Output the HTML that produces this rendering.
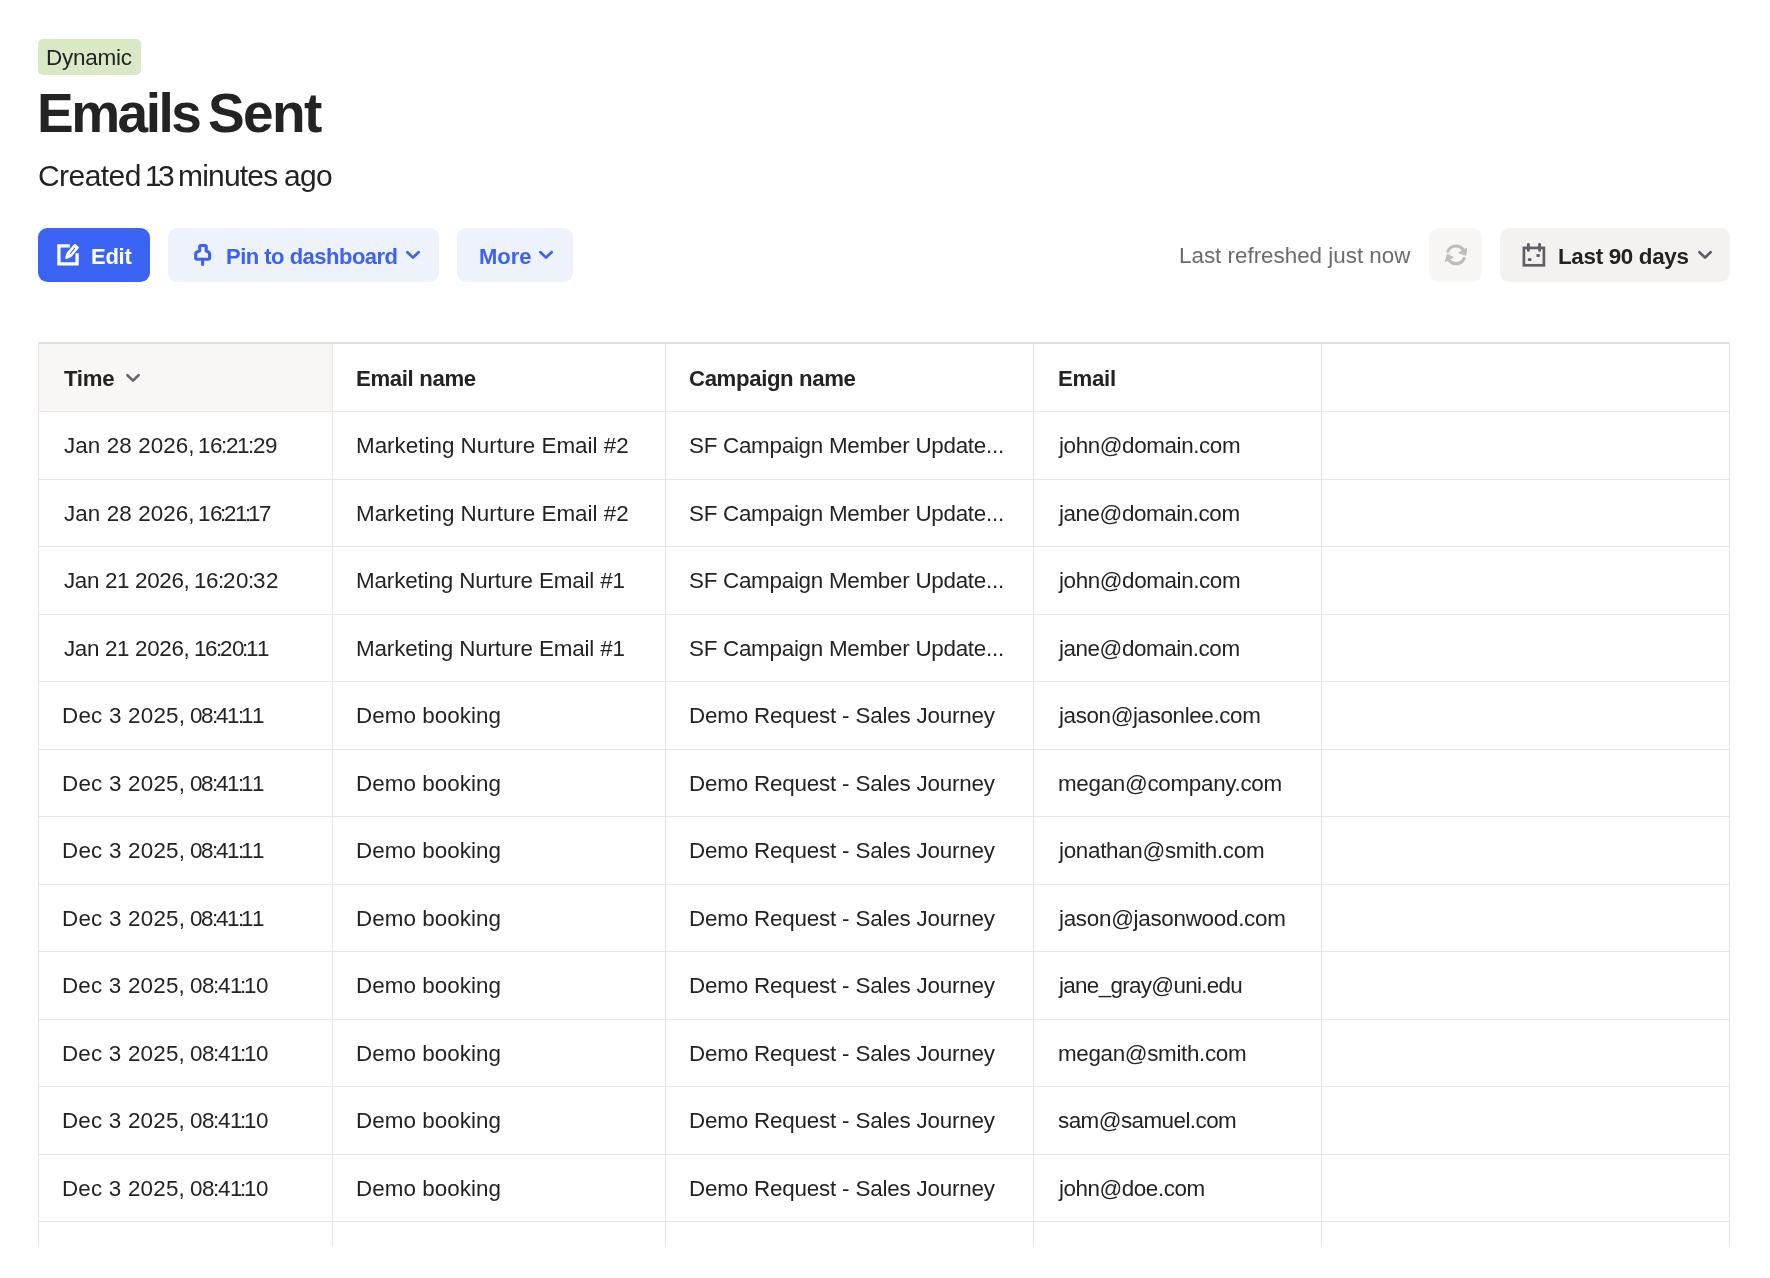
<!DOCTYPE html>
<html><head><meta charset="utf-8"><title>Emails Sent</title>
<style>
html,body{margin:0;padding:0;background:#fff;}
body{width:1770px;height:1278px;position:relative;overflow:hidden;font-family:"Liberation Sans",sans-serif;color:#232323;}
.t{position:absolute;white-space:nowrap;will-change:transform;}
.b{font-weight:bold;}
.box{position:absolute;}
.hl{position:absolute;height:1px;background:#e8e5e3;}
.vl{position:absolute;width:1px;background:#e8e5e3;}
svg{position:absolute;overflow:visible;}
</style></head><body>
<div class="box" style="left:38px;top:39px;width:103px;height:36px;background:#d9e9c5;border-radius:5px;"></div>
<div class="t " style="left:46.42px;top:46.95px;font-size:22.5px;line-height:22.5px;letter-spacing:-0.267px;">Dynamic</div>
<div class="t b" style="left:36.88px;top:86.34px;font-size:55px;line-height:55px;letter-spacing:-2.5px;color:#232323;">Emails</div>
<div class="t b" style="left:207.88px;top:86.34px;font-size:55px;line-height:55px;letter-spacing:-1.592px;color:#232323;">Sent</div>
<div class="t " style="left:38.1px;top:160.50px;font-size:30px;line-height:30px;letter-spacing:-0.558px;">Created</div>
<div class="t " style="left:144.55px;top:160.50px;font-size:30px;line-height:30px;letter-spacing:-4.6px;">1</div>
<div class="t " style="left:158.28px;top:160.50px;font-size:30px;line-height:30px;letter-spacing:-0.95px;">3</div>
<div class="t " style="left:178.3px;top:160.50px;font-size:30px;line-height:30px;letter-spacing:-0.812px;">minutes</div>
<div class="t " style="left:283.55px;top:160.50px;font-size:30px;line-height:30px;letter-spacing:-0.713px;">ago</div>
<div class="box" style="left:38px;top:228px;width:112px;height:54px;background:#3b64f4;border-radius:9.5px;"></div>
<svg style="left:52px;top:239px" width="32" height="32" viewBox="0 0 32 32">
<path d="M17.8 6.9 H6.9 V24.9 H25.1 V14.3" fill="none" stroke="#fff" stroke-width="3.25" stroke-linejoin="miter"/>
<path d="M22.3 5.1 Q22.8 4.7 23.4 5.1 L26.7 7.9 Q27.2 8.4 26.8 8.9 L19.7 17.6 Q17.2 19.5 14.4 20 Q13 19.9 13.3 18.4 Q13.9 15.4 15.3 13.1 Z" fill="#fff"/>
<path d="M22.6 9.3 L18.5 14.5" stroke="#3b64f4" stroke-width="1.1" stroke-linecap="round"/>
</svg>
<div class="t b" style="left:91.4px;top:246.38px;font-size:22px;line-height:22px;letter-spacing:-0.258px;color:#fff;">Edit</div>
<div class="box" style="left:168px;top:228px;width:271px;height:54px;background:#eef2fd;border-radius:9.5px;"></div>
<svg style="left:187px;top:239px" width="32" height="32" viewBox="0 0 32 32">
<path d="M12.7 11.8 V7.6 Q12.7 6.5 13.8 6.5 H18.1 Q19.2 6.5 19.2 7.6 V11.8 L21.6 13.2 Q22.6 13.8 22.6 15 V18.8 Q22.6 20.3 21.1 20.3 H10.2 Q8.7 20.3 8.7 18.8 V15 Q8.7 13.8 9.7 13.2 Z" fill="none" stroke="#3b62f0" stroke-width="3.1" stroke-linejoin="round"/>
<path d="M15.6 20.3 V25.6" stroke="#3b62f0" stroke-width="3" stroke-linecap="round"/>
</svg>
<div class="t b" style="left:226.0px;top:246.28px;font-size:22px;line-height:22px;letter-spacing:-0.51px;color:#3b62f0;">Pin to dashboard</div>
<svg style="left:400.00px;top:243.00px" width="24" height="24" viewBox="0 0 24 24"><path d="M7.4 9.2 L13 14.6 L18.6 9.2" fill="none" stroke="#3b62f0" stroke-width="2.7" stroke-linecap="round" stroke-linejoin="round"/></svg>
<div class="box" style="left:457px;top:228px;width:116px;height:54px;background:#eef2fd;border-radius:9.5px;"></div>
<div class="t b" style="left:479.0px;top:246.28px;font-size:22px;line-height:22px;letter-spacing:-0.025px;color:#3b62f0;">More</div>
<svg style="left:533.00px;top:243.00px" width="24" height="24" viewBox="0 0 24 24"><path d="M7.4 9.2 L13 14.6 L18.6 9.2" fill="none" stroke="#3b62f0" stroke-width="2.7" stroke-linecap="round" stroke-linejoin="round"/></svg>
<div class="t " style="left:1178.72px;top:244.74px;font-size:22.4px;line-height:22.4px;letter-spacing:-0.005px;color:#6b6a6f;">Last refreshed just now</div>
<div class="box" style="left:1429px;top:228px;width:53px;height:54px;background:#f7f6f5;border-radius:9.5px;"></div>
<svg style="left:1440px;top:239px" width="32" height="32" viewBox="0 0 32 32">
<path d="M7.9 12.3 A8.9 8.9 0 0 1 23.1 10.5" fill="none" stroke="#bdbdbd" stroke-width="3.1" stroke-linecap="round"/>
<path d="M24.1 19.5 A8.9 8.9 0 0 1 8.9 21.1" fill="none" stroke="#bdbdbd" stroke-width="3.1" stroke-linecap="round"/>
<path d="M26.6 9.4 L25.7 16.1 L19.1 13.7 Z" fill="#bdbdbd" stroke="#bdbdbd" stroke-width="1.2" stroke-linejoin="round"/>
<path d="M5.4 22.4 L7.4 15.5 L13 18.2 Z" fill="#bdbdbd" stroke="#bdbdbd" stroke-width="1.2" stroke-linejoin="round"/>
</svg>
<div class="box" style="left:1500px;top:228px;width:230px;height:54px;background:#f3f2f1;border-radius:9.5px;"></div>
<svg style="left:1518px;top:239px" width="32" height="32" viewBox="0 0 32 32">
<rect x="5.9" y="8.9" width="20" height="17.4" fill="none" stroke="#615f66" stroke-width="2.7"/>
<path d="M10.4 5.5 V11.4 M21.6 5.5 V11.4" stroke="#615f66" stroke-width="2.9" stroke-linecap="round"/>
<rect x="9.9" y="19.2" width="3.5" height="2.8" fill="#615f66"/>
<rect x="18.4" y="15.1" width="3.4" height="2.8" fill="#615f66"/>
</svg>
<div class="t b" style="left:1557.7px;top:245.94px;font-size:22.4px;line-height:22.4px;letter-spacing:-0.316px;color:#232323;">Last 90 days</div>
<svg style="left:1691.50px;top:243.00px" width="24" height="24" viewBox="0 0 24 24"><path d="M7.4 9.2 L13 14.6 L18.6 9.2" fill="none" stroke="#615f66" stroke-width="2.7" stroke-linecap="round" stroke-linejoin="round"/></svg>
<div class="box" style="left:38px;top:342px;width:1692px;height:905px;overflow:hidden;">
<div class="box" style="left:1px;top:2px;width:293px;height:67px;background:#f8f7f5;"></div>
<div class="box" style="left:0;top:0;width:1692px;height:2px;background:#e3dfdc;"></div>
<div class="hl" style="left:0;top:69px;width:1692px;"></div>
<div class="hl" style="left:0;top:137px;width:1692px;"></div>
<div class="hl" style="left:0;top:204px;width:1692px;"></div>
<div class="hl" style="left:0;top:272px;width:1692px;"></div>
<div class="hl" style="left:0;top:339px;width:1692px;"></div>
<div class="hl" style="left:0;top:407px;width:1692px;"></div>
<div class="hl" style="left:0;top:474px;width:1692px;"></div>
<div class="hl" style="left:0;top:542px;width:1692px;"></div>
<div class="hl" style="left:0;top:609px;width:1692px;"></div>
<div class="hl" style="left:0;top:677px;width:1692px;"></div>
<div class="hl" style="left:0;top:744px;width:1692px;"></div>
<div class="hl" style="left:0;top:812px;width:1692px;"></div>
<div class="hl" style="left:0;top:879px;width:1692px;"></div>
<div class="vl" style="left:0px;top:0;height:905px;"></div>
<div class="vl" style="left:294px;top:0;height:905px;"></div>
<div class="vl" style="left:627px;top:0;height:905px;"></div>
<div class="vl" style="left:995px;top:0;height:905px;"></div>
<div class="vl" style="left:1283px;top:0;height:905px;"></div>
<div class="vl" style="left:1691px;top:0;height:905px;"></div>
<div class="t b" style="left:25.75px;top:26.11px;font-size:22.2px;line-height:22.2px;letter-spacing:-0.3px;">Time</div>
<div class="t b" style="left:318.3px;top:26.11px;font-size:22.2px;line-height:22.2px;letter-spacing:-0.353px;">Email name</div>
<div class="t b" style="left:651.33px;top:26.11px;font-size:22.2px;line-height:22.2px;letter-spacing:-0.371px;">Campaign name</div>
<div class="t b" style="left:1020.1px;top:26.11px;font-size:22.2px;line-height:22.2px;letter-spacing:-0.262px;">Email</div>
<svg style="left:82.00px;top:24.00px" width="24" height="24" viewBox="0 0 24 24"><path d="M7.4 9.2 L13 14.6 L18.6 9.2" fill="none" stroke="#67656c" stroke-width="2.6" stroke-linecap="round" stroke-linejoin="round"/></svg>
<div class="t " style="left:25.52px;top:93.14px;font-size:22.4px;line-height:22.4px;letter-spacing:0.1px;">Jan 28 2026,</div>
<div class="t " style="left:160.05px;top:93.14px;font-size:22.4px;line-height:22.4px;">1</div>
<div class="t " style="left:172.04px;top:93.14px;font-size:22.4px;line-height:22.4px;">6</div>
<div class="t " style="left:183.27px;top:93.14px;font-size:22.4px;line-height:22.4px;">:</div>
<div class="t " style="left:188.01px;top:93.14px;font-size:22.4px;line-height:22.4px;">2</div>
<div class="t " style="left:199.37px;top:93.14px;font-size:22.4px;line-height:22.4px;">1</div>
<div class="t " style="left:210.48px;top:93.14px;font-size:22.4px;line-height:22.4px;">:</div>
<div class="t " style="left:215.21px;top:93.14px;font-size:22.4px;line-height:22.4px;">2</div>
<div class="t " style="left:227.33px;top:93.14px;font-size:22.4px;line-height:22.4px;">9</div>
<div class="t " style="left:317.73px;top:93.14px;font-size:22.4px;line-height:22.4px;letter-spacing:0.005px;">Marketing Nurture Email #2</div>
<div class="t " style="left:651.2px;top:93.14px;font-size:22.4px;line-height:22.4px;letter-spacing:-0.267px;">SF Campaign Member Update...</div>
<div class="t " style="left:1020.7px;top:93.14px;font-size:22.4px;line-height:22.4px;letter-spacing:-0.391px;">john@domain.com</div>
<div class="t " style="left:25.52px;top:160.64px;font-size:22.4px;line-height:22.4px;letter-spacing:0.1px;">Jan 28 2026,</div>
<div class="t " style="left:160.45px;top:160.64px;font-size:22.4px;line-height:22.4px;">1</div>
<div class="t " style="left:171.63px;top:160.64px;font-size:22.4px;line-height:22.4px;">6</div>
<div class="t " style="left:182.06px;top:160.64px;font-size:22.4px;line-height:22.4px;">:</div>
<div class="t " style="left:185.99px;top:160.64px;font-size:22.4px;line-height:22.4px;">2</div>
<div class="t " style="left:196.54px;top:160.64px;font-size:22.4px;line-height:22.4px;">1</div>
<div class="t " style="left:206.84px;top:160.64px;font-size:22.4px;line-height:22.4px;">:</div>
<div class="t " style="left:210.15px;top:160.64px;font-size:22.4px;line-height:22.4px;">1</div>
<div class="t " style="left:221.32px;top:160.64px;font-size:22.4px;line-height:22.4px;">7</div>
<div class="t " style="left:317.73px;top:160.64px;font-size:22.4px;line-height:22.4px;letter-spacing:0.005px;">Marketing Nurture Email #2</div>
<div class="t " style="left:651.2px;top:160.64px;font-size:22.4px;line-height:22.4px;letter-spacing:-0.267px;">SF Campaign Member Update...</div>
<div class="t " style="left:1020.7px;top:160.64px;font-size:22.4px;line-height:22.4px;letter-spacing:-0.427px;">jane@domain.com</div>
<div class="t " style="left:25.52px;top:228.14px;font-size:22.4px;line-height:22.4px;letter-spacing:-0.336px;">Jan 21 2026,</div>
<div class="t " style="left:155.65px;top:228.14px;font-size:22.4px;line-height:22.4px;">1</div>
<div class="t " style="left:168.14px;top:228.14px;font-size:22.4px;line-height:22.4px;">6</div>
<div class="t " style="left:179.88px;top:228.14px;font-size:22.4px;line-height:22.4px;">:</div>
<div class="t " style="left:185.12px;top:228.14px;font-size:22.4px;line-height:22.4px;">2</div>
<div class="t " style="left:197.86px;top:228.14px;font-size:22.4px;line-height:22.4px;">0</div>
<div class="t " style="left:209.72px;top:228.14px;font-size:22.4px;line-height:22.4px;">:</div>
<div class="t " style="left:215.21px;top:228.14px;font-size:22.4px;line-height:22.4px;">3</div>
<div class="t " style="left:227.82px;top:228.14px;font-size:22.4px;line-height:22.4px;">2</div>
<div class="t " style="left:317.73px;top:228.14px;font-size:22.4px;line-height:22.4px;letter-spacing:-0.139px;">Marketing Nurture Email #1</div>
<div class="t " style="left:651.2px;top:228.14px;font-size:22.4px;line-height:22.4px;letter-spacing:-0.267px;">SF Campaign Member Update...</div>
<div class="t " style="left:1020.7px;top:228.14px;font-size:22.4px;line-height:22.4px;letter-spacing:-0.391px;">john@domain.com</div>
<div class="t " style="left:25.52px;top:295.64px;font-size:22.4px;line-height:22.4px;letter-spacing:-0.336px;">Jan 21 2026,</div>
<div class="t " style="left:155.65px;top:295.64px;font-size:22.4px;line-height:22.4px;">1</div>
<div class="t " style="left:167.06px;top:295.64px;font-size:22.4px;line-height:22.4px;">6</div>
<div class="t " style="left:177.71px;top:295.64px;font-size:22.4px;line-height:22.4px;">:</div>
<div class="t " style="left:181.87px;top:295.64px;font-size:22.4px;line-height:22.4px;">2</div>
<div class="t " style="left:193.53px;top:295.64px;font-size:22.4px;line-height:22.4px;">0</div>
<div class="t " style="left:204.31px;top:295.64px;font-size:22.4px;line-height:22.4px;">:</div>
<div class="t " style="left:207.84px;top:295.64px;font-size:22.4px;line-height:22.4px;">1</div>
<div class="t " style="left:218.62px;top:295.64px;font-size:22.4px;line-height:22.4px;">1</div>
<div class="t " style="left:317.73px;top:295.64px;font-size:22.4px;line-height:22.4px;letter-spacing:-0.139px;">Marketing Nurture Email #1</div>
<div class="t " style="left:651.2px;top:295.64px;font-size:22.4px;line-height:22.4px;letter-spacing:-0.267px;">SF Campaign Member Update...</div>
<div class="t " style="left:1020.7px;top:295.64px;font-size:22.4px;line-height:22.4px;letter-spacing:-0.427px;">jane@domain.com</div>
<div class="t " style="left:24.02px;top:363.14px;font-size:22.4px;line-height:22.4px;letter-spacing:0.222px;">Dec 3 2025,</div>
<div class="t " style="left:151.62px;top:363.14px;font-size:22.4px;line-height:22.4px;">0</div>
<div class="t " style="left:163.22px;top:363.14px;font-size:22.4px;line-height:22.4px;">8</div>
<div class="t " style="left:173.69px;top:363.14px;font-size:22.4px;line-height:22.4px;">:</div>
<div class="t " style="left:178.28px;top:363.14px;font-size:22.4px;line-height:22.4px;">4</div>
<div class="t " style="left:189.25px;top:363.14px;font-size:22.4px;line-height:22.4px;">1</div>
<div class="t " style="left:199.59px;top:363.14px;font-size:22.4px;line-height:22.4px;">:</div>
<div class="t " style="left:202.93px;top:363.14px;font-size:22.4px;line-height:22.4px;">1</div>
<div class="t " style="left:213.52px;top:363.14px;font-size:22.4px;line-height:22.4px;">1</div>
<div class="t " style="left:317.73px;top:363.14px;font-size:22.4px;line-height:22.4px;letter-spacing:0.055px;">Demo booking</div>
<div class="t " style="left:650.92px;top:363.14px;font-size:22.4px;line-height:22.4px;letter-spacing:-0.189px;">Demo Request - Sales Journey</div>
<div class="t " style="left:1020.7px;top:363.14px;font-size:22.4px;line-height:22.4px;letter-spacing:-0.376px;">jason@jasonlee.com</div>
<div class="t " style="left:24.02px;top:430.64px;font-size:22.4px;line-height:22.4px;letter-spacing:0.222px;">Dec 3 2025,</div>
<div class="t " style="left:151.62px;top:430.64px;font-size:22.4px;line-height:22.4px;">0</div>
<div class="t " style="left:163.22px;top:430.64px;font-size:22.4px;line-height:22.4px;">8</div>
<div class="t " style="left:173.69px;top:430.64px;font-size:22.4px;line-height:22.4px;">:</div>
<div class="t " style="left:178.28px;top:430.64px;font-size:22.4px;line-height:22.4px;">4</div>
<div class="t " style="left:189.25px;top:430.64px;font-size:22.4px;line-height:22.4px;">1</div>
<div class="t " style="left:199.59px;top:430.64px;font-size:22.4px;line-height:22.4px;">:</div>
<div class="t " style="left:202.93px;top:430.64px;font-size:22.4px;line-height:22.4px;">1</div>
<div class="t " style="left:213.52px;top:430.64px;font-size:22.4px;line-height:22.4px;">1</div>
<div class="t " style="left:317.73px;top:430.64px;font-size:22.4px;line-height:22.4px;letter-spacing:0.055px;">Demo booking</div>
<div class="t " style="left:650.92px;top:430.64px;font-size:22.4px;line-height:22.4px;letter-spacing:-0.189px;">Demo Request - Sales Journey</div>
<div class="t " style="left:1019.7px;top:430.64px;font-size:22.4px;line-height:22.4px;letter-spacing:-0.297px;">megan@company.com</div>
<div class="t " style="left:24.02px;top:498.14px;font-size:22.4px;line-height:22.4px;letter-spacing:0.222px;">Dec 3 2025,</div>
<div class="t " style="left:151.62px;top:498.14px;font-size:22.4px;line-height:22.4px;">0</div>
<div class="t " style="left:163.22px;top:498.14px;font-size:22.4px;line-height:22.4px;">8</div>
<div class="t " style="left:173.69px;top:498.14px;font-size:22.4px;line-height:22.4px;">:</div>
<div class="t " style="left:178.28px;top:498.14px;font-size:22.4px;line-height:22.4px;">4</div>
<div class="t " style="left:189.25px;top:498.14px;font-size:22.4px;line-height:22.4px;">1</div>
<div class="t " style="left:199.59px;top:498.14px;font-size:22.4px;line-height:22.4px;">:</div>
<div class="t " style="left:202.93px;top:498.14px;font-size:22.4px;line-height:22.4px;">1</div>
<div class="t " style="left:213.52px;top:498.14px;font-size:22.4px;line-height:22.4px;">1</div>
<div class="t " style="left:317.73px;top:498.14px;font-size:22.4px;line-height:22.4px;letter-spacing:0.055px;">Demo booking</div>
<div class="t " style="left:650.92px;top:498.14px;font-size:22.4px;line-height:22.4px;letter-spacing:-0.189px;">Demo Request - Sales Journey</div>
<div class="t " style="left:1020.7px;top:498.14px;font-size:22.4px;line-height:22.4px;letter-spacing:-0.3px;">jonathan@smith.com</div>
<div class="t " style="left:24.02px;top:565.64px;font-size:22.4px;line-height:22.4px;letter-spacing:0.222px;">Dec 3 2025,</div>
<div class="t " style="left:151.62px;top:565.64px;font-size:22.4px;line-height:22.4px;">0</div>
<div class="t " style="left:163.22px;top:565.64px;font-size:22.4px;line-height:22.4px;">8</div>
<div class="t " style="left:173.69px;top:565.64px;font-size:22.4px;line-height:22.4px;">:</div>
<div class="t " style="left:178.28px;top:565.64px;font-size:22.4px;line-height:22.4px;">4</div>
<div class="t " style="left:189.25px;top:565.64px;font-size:22.4px;line-height:22.4px;">1</div>
<div class="t " style="left:199.59px;top:565.64px;font-size:22.4px;line-height:22.4px;">:</div>
<div class="t " style="left:202.93px;top:565.64px;font-size:22.4px;line-height:22.4px;">1</div>
<div class="t " style="left:213.52px;top:565.64px;font-size:22.4px;line-height:22.4px;">1</div>
<div class="t " style="left:317.73px;top:565.64px;font-size:22.4px;line-height:22.4px;letter-spacing:0.055px;">Demo booking</div>
<div class="t " style="left:650.92px;top:565.64px;font-size:22.4px;line-height:22.4px;letter-spacing:-0.189px;">Demo Request - Sales Journey</div>
<div class="t " style="left:1020.7px;top:565.64px;font-size:22.4px;line-height:22.4px;letter-spacing:-0.279px;">jason@jasonwood.com</div>
<div class="t " style="left:24.02px;top:633.14px;font-size:22.4px;line-height:22.4px;letter-spacing:0.203px;">Dec 3 2025,</div>
<div class="t " style="left:151.72px;top:633.14px;font-size:22.4px;line-height:22.4px;">0</div>
<div class="t " style="left:163.86px;top:633.14px;font-size:22.4px;line-height:22.4px;">8</div>
<div class="t " style="left:174.86px;top:633.14px;font-size:22.4px;line-height:22.4px;">:</div>
<div class="t " style="left:180.0px;top:633.14px;font-size:22.4px;line-height:22.4px;">4</div>
<div class="t " style="left:191.5px;top:633.14px;font-size:22.4px;line-height:22.4px;">1</div>
<div class="t " style="left:202.39px;top:633.14px;font-size:22.4px;line-height:22.4px;">:</div>
<div class="t " style="left:206.27px;top:633.14px;font-size:22.4px;line-height:22.4px;">1</div>
<div class="t " style="left:218.28px;top:633.14px;font-size:22.4px;line-height:22.4px;">0</div>
<div class="t " style="left:317.73px;top:633.14px;font-size:22.4px;line-height:22.4px;letter-spacing:0.055px;">Demo booking</div>
<div class="t " style="left:650.92px;top:633.14px;font-size:22.4px;line-height:22.4px;letter-spacing:-0.189px;">Demo Request - Sales Journey</div>
<div class="t " style="left:1020.7px;top:633.14px;font-size:22.4px;line-height:22.4px;letter-spacing:-0.669px;">jane_gray@uni.edu</div>
<div class="t " style="left:24.02px;top:700.64px;font-size:22.4px;line-height:22.4px;letter-spacing:0.203px;">Dec 3 2025,</div>
<div class="t " style="left:151.72px;top:700.64px;font-size:22.4px;line-height:22.4px;">0</div>
<div class="t " style="left:163.86px;top:700.64px;font-size:22.4px;line-height:22.4px;">8</div>
<div class="t " style="left:174.86px;top:700.64px;font-size:22.4px;line-height:22.4px;">:</div>
<div class="t " style="left:180.0px;top:700.64px;font-size:22.4px;line-height:22.4px;">4</div>
<div class="t " style="left:191.5px;top:700.64px;font-size:22.4px;line-height:22.4px;">1</div>
<div class="t " style="left:202.39px;top:700.64px;font-size:22.4px;line-height:22.4px;">:</div>
<div class="t " style="left:206.27px;top:700.64px;font-size:22.4px;line-height:22.4px;">1</div>
<div class="t " style="left:218.28px;top:700.64px;font-size:22.4px;line-height:22.4px;">0</div>
<div class="t " style="left:317.73px;top:700.64px;font-size:22.4px;line-height:22.4px;letter-spacing:0.055px;">Demo booking</div>
<div class="t " style="left:650.92px;top:700.64px;font-size:22.4px;line-height:22.4px;letter-spacing:-0.189px;">Demo Request - Sales Journey</div>
<div class="t " style="left:1019.7px;top:700.64px;font-size:22.4px;line-height:22.4px;letter-spacing:-0.329px;">megan@smith.com</div>
<div class="t " style="left:24.02px;top:768.14px;font-size:22.4px;line-height:22.4px;letter-spacing:0.203px;">Dec 3 2025,</div>
<div class="t " style="left:151.72px;top:768.14px;font-size:22.4px;line-height:22.4px;">0</div>
<div class="t " style="left:163.86px;top:768.14px;font-size:22.4px;line-height:22.4px;">8</div>
<div class="t " style="left:174.86px;top:768.14px;font-size:22.4px;line-height:22.4px;">:</div>
<div class="t " style="left:180.0px;top:768.14px;font-size:22.4px;line-height:22.4px;">4</div>
<div class="t " style="left:191.5px;top:768.14px;font-size:22.4px;line-height:22.4px;">1</div>
<div class="t " style="left:202.39px;top:768.14px;font-size:22.4px;line-height:22.4px;">:</div>
<div class="t " style="left:206.27px;top:768.14px;font-size:22.4px;line-height:22.4px;">1</div>
<div class="t " style="left:218.28px;top:768.14px;font-size:22.4px;line-height:22.4px;">0</div>
<div class="t " style="left:317.73px;top:768.14px;font-size:22.4px;line-height:22.4px;letter-spacing:0.055px;">Demo booking</div>
<div class="t " style="left:650.92px;top:768.14px;font-size:22.4px;line-height:22.4px;letter-spacing:-0.189px;">Demo Request - Sales Journey</div>
<div class="t " style="left:1020.18px;top:768.14px;font-size:22.4px;line-height:22.4px;letter-spacing:-0.538px;">sam@samuel.com</div>
<div class="t " style="left:24.02px;top:835.64px;font-size:22.4px;line-height:22.4px;letter-spacing:0.203px;">Dec 3 2025,</div>
<div class="t " style="left:151.72px;top:835.64px;font-size:22.4px;line-height:22.4px;">0</div>
<div class="t " style="left:163.86px;top:835.64px;font-size:22.4px;line-height:22.4px;">8</div>
<div class="t " style="left:174.86px;top:835.64px;font-size:22.4px;line-height:22.4px;">:</div>
<div class="t " style="left:180.0px;top:835.64px;font-size:22.4px;line-height:22.4px;">4</div>
<div class="t " style="left:191.5px;top:835.64px;font-size:22.4px;line-height:22.4px;">1</div>
<div class="t " style="left:202.39px;top:835.64px;font-size:22.4px;line-height:22.4px;">:</div>
<div class="t " style="left:206.27px;top:835.64px;font-size:22.4px;line-height:22.4px;">1</div>
<div class="t " style="left:218.28px;top:835.64px;font-size:22.4px;line-height:22.4px;">0</div>
<div class="t " style="left:317.73px;top:835.64px;font-size:22.4px;line-height:22.4px;letter-spacing:0.055px;">Demo booking</div>
<div class="t " style="left:650.92px;top:835.64px;font-size:22.4px;line-height:22.4px;letter-spacing:-0.189px;">Demo Request - Sales Journey</div>
<div class="t " style="left:1020.7px;top:835.64px;font-size:22.4px;line-height:22.4px;letter-spacing:-0.443px;">john@doe.com</div>
</div>
</body></html>
